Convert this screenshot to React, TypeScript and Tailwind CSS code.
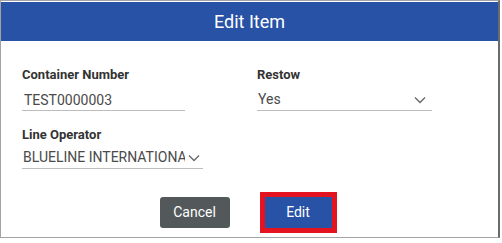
import React, { useState } from "react";

function Chevron() {
  return (
    <svg width="12" height="8" viewBox="0 0 12 8" className="shrink-0">
      <path d="M1 1.5 L6 6.5 L11 1.5" fill="none" stroke="#666" strokeWidth="1.3" />
    </svg>
  );
}

function EditItemDialog() {
  const [containerNumber, setContainerNumber] = useState("TEST0000003");

  return (
    <div className="w-[500px] h-[238px] flex flex-col border border-[#a3a3a3] border-r-[#6b6b6b] border-r-2 bg-white font-['Roboto',sans-serif]">
      <div className="h-[39px] mt-px flex items-center justify-center bg-[#2752a6] text-white text-[18px]">
        Edit Item
      </div>

      <div className="grid grid-cols-[235px_1fr] pl-[21px] pt-[26px]">
        <div>
          <div className="text-[13px] font-bold text-[#333] leading-[16px]">Container Number</div>
          <input
            type="text"
            value={containerNumber}
            onChange={(e) => setContainerNumber(e.target.value)}
            className="mt-[6px] w-[163px] h-[22px] px-[2px] border-b border-[#bdbdbd] text-[14px] text-[#4a4a4a] outline-none"
          />
        </div>
        <div>
          <div className="text-[13px] font-bold text-[#333] leading-[16px]">Restow</div>
          <div className="mt-[6px] w-[175px] h-[22px] pl-[1px] pr-[6px] flex items-center justify-between border-b border-[#bdbdbd] text-[14px] text-[#4a4a4a]">
            <span>Yes</span>
            <Chevron />
          </div>
        </div>
        <div className="mt-[15px]">
          <div className="text-[13px] font-bold text-[#333] leading-[16px]">Line Operator</div>
          <div className="mt-[5px] w-[181px] h-[21px] pl-[1px] pr-[3px] flex items-center gap-[3px] border-b border-[#bdbdbd] text-[14px] text-[#4a4a4a]">
            <span className="overflow-hidden whitespace-nowrap w-[164px]">BLUELINE INTERNATIONAL</span>
            <Chevron />
          </div>
        </div>
      </div>

      <div className="mt-[28px] flex justify-center gap-[35px] pr-[8px]">
        <button className="w-[70px] h-[31px] rounded-[3px] bg-[#53585a] text-white text-[14px]">
          Cancel
        </button>
        <button className="w-[67px] h-[31px] bg-[#2752a6] text-white text-[14px] outline-[5px] outline-solid outline-[#e3141f]">
          Edit
        </button>
      </div>
    </div>
  );
}

export default function App() {
  return (
    <div className="w-[502px] h-[243px] bg-white">
      <EditItemDialog />
    </div>
  );
}
